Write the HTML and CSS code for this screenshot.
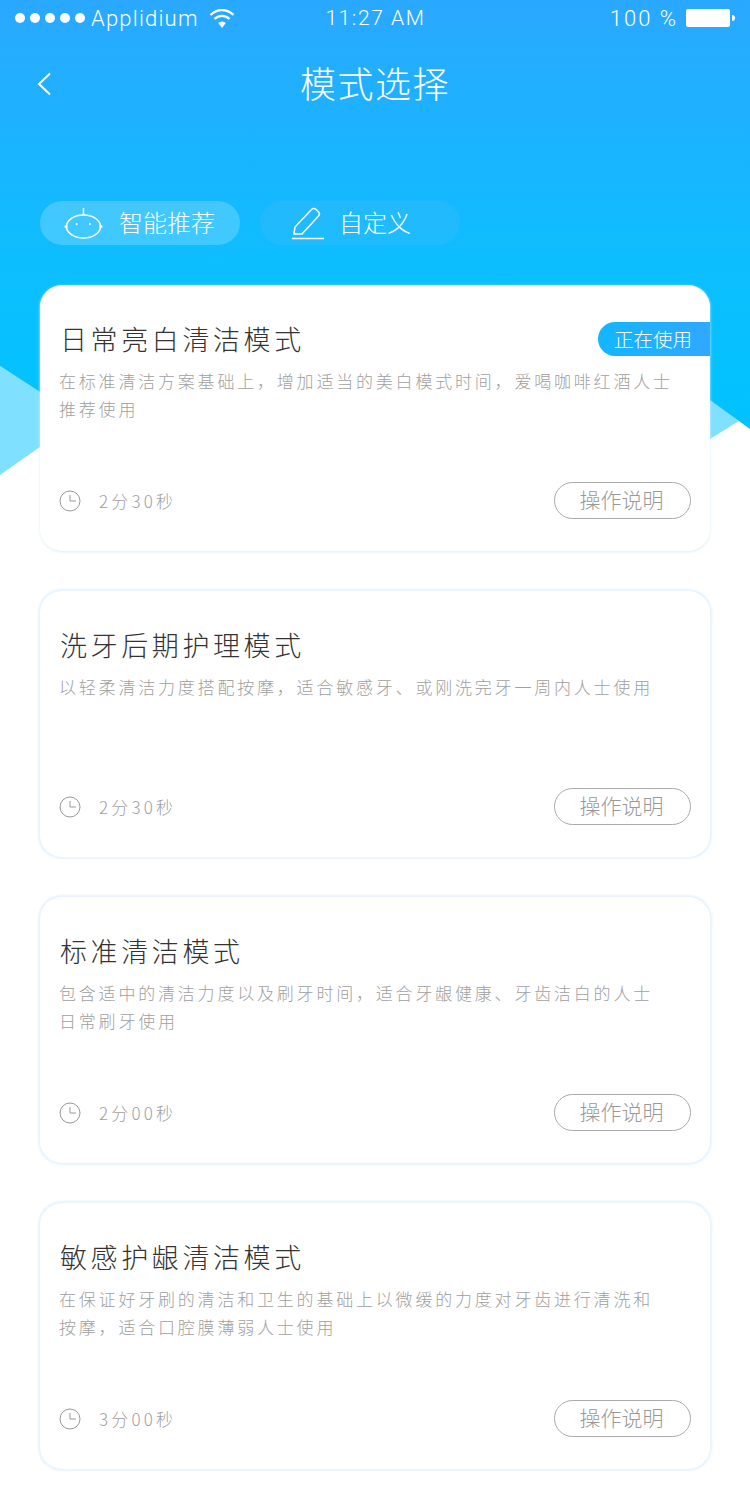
FILE: index.html
```html
<!doctype html>
<html lang="zh-CN">
  <head>
    <meta charset="UTF-8" />
    <meta name="viewport" content="width=device-width, initial-scale=1.0" />
    <title>模式选择</title>
    <link rel="stylesheet" href="styles.css">
  </head>
  <body>
    <svg class="bg" width="750" height="480" viewBox="0 0 750 480">
      <defs>
        <linearGradient id="sky" x1="0" y1="0" x2="0" y2="1">
          <stop offset="0" stop-color="#2aa8ff" />
          <stop offset="0.65" stop-color="#0cbfff" />
          <stop offset="1" stop-color="#00c2ff" />
        </linearGradient>
      </defs>
      <polygon points="0,366 40,392 40,447 0,475" fill="#80e0ff" />
      <polygon points="710,398 739,421 710,439" fill="#80e0ff" />
      <polygon points="0,0 750,0 750,429 710,400 40,392 0,366" fill="url(#sky)" />
    </svg>

    <div class="page">
      <div class="status-bar">
        <div class="status-left">
          <span class="dots"><i></i><i></i><i></i><i></i><i></i></span>
          <span class="carrier">Applidium</span>
          <svg class="wifi" width="26" height="20" viewBox="0 0 26 20" fill="none" stroke="#fff" stroke-width="2.4">
            <path d="M1.5 7a16 16 0 0 1 23 0" />
            <path d="M5.5 11a10.5 10.5 0 0 1 15 0" />
            <path d="M13 20l-3.8-5a5.5 5.5 0 0 1 7.6 0z" fill="#fff" stroke="none" />
          </svg>
        </div>
        <div class="status-time">11:27 AM</div>
        <div class="status-right">
          <span class="percent">100 %</span>
          <span class="battery"></span>
        </div>
      </div>

      <div class="nav">
        <svg class="back" width="15" height="24" viewBox="0 0 15 24" fill="none" stroke="#fff" stroke-width="2">
          <path d="M13 1.5L2 12l11 10.500" />
        </svg>
        <h1>模式选择</h1>
      </div>

      <div class="tabs">
        <div class="tab tab-active">
          <svg width="40" height="36" viewBox="0 0 40 36" fill="none" stroke="#fff" stroke-width="1.5">
            <path d="M19.500 0v7" />
            <ellipse cx="19.500" cy="18.500" rx="17" ry="11.500" />
            <circle cx="2" cy="18.500" r="1.500" fill="#fff" stroke="none" />
            <circle cx="37" cy="18.500" r="1.500" fill="#fff" stroke="none" />
            <circle cx="12.700" cy="16" r="1" fill="#fff" stroke="none" />
            <circle cx="26" cy="16" r="1" fill="#fff" stroke="none" />
          </svg>
          <span>智能推荐</span>
        </div>
        <div class="tab tab-plain">
          <svg width="34" height="34" viewBox="0 0 34 34" fill="none" stroke="#fff" stroke-width="1.500">
            <path d="M3 28l1-7L20.500 3.500a3 3 0 0 1 4.300-.2l2.600 2.500a3 3 0 0 1 .1 4.200L11 28z" />
            <path d="M1 32.500h32" />
          </svg>
          <span>自定义</span>
        </div>
      </div>

      <div class="card">
        <span class="badge">正在使用</span>
        <h2>日常亮白清洁模式</h2>
        <p class="desc">在标准清洁方案基础上，增加适当的美白模式时间，爱喝咖啡红酒人士<br>推荐使用</p>
        <div class="card-foot">
          <div class="time">
            <svg class="clock" width="22" height="22" viewBox="0 0 22 22" fill="none" stroke="#999" stroke-width="1">
              <circle cx="11" cy="11" r="10" />
              <path d="M11 5v6h6" />
            </svg>
            <span>2分30秒</span>
          </div>
          <div class="help-btn">操作说明</div>
        </div>
      </div>

      <div class="card">
        <h2>洗牙后期护理模式</h2>
        <p class="desc">以轻柔清洁力度搭配按摩，适合敏感牙、或刚洗完牙一周内人士使用</p>
        <div class="card-foot">
          <div class="time">
            <svg class="clock" width="22" height="22" viewBox="0 0 22 22" fill="none" stroke="#999" stroke-width="1">
              <circle cx="11" cy="11" r="10" />
              <path d="M11 5v6h6" />
            </svg>
            <span>2分30秒</span>
          </div>
          <div class="help-btn">操作说明</div>
        </div>
      </div>

      <div class="card">
        <h2>标准清洁模式</h2>
        <p class="desc">包含适中的清洁力度以及刷牙时间，适合牙龈健康、牙齿洁白的人士<br>日常刷牙使用</p>
        <div class="card-foot">
          <div class="time">
            <svg class="clock" width="22" height="22" viewBox="0 0 22 22" fill="none" stroke="#999" stroke-width="1">
              <circle cx="11" cy="11" r="10" />
              <path d="M11 5v6h6" />
            </svg>
            <span>2分00秒</span>
          </div>
          <div class="help-btn">操作说明</div>
        </div>
      </div>

      <div class="card">
        <h2>敏感护龈清洁模式</h2>
        <p class="desc">在保证好牙刷的清洁和卫生的基础上以微缓的力度对牙齿进行清洗和<br>按摩，适合口腔膜薄弱人士使用</p>
        <div class="card-foot">
          <div class="time">
            <svg class="clock" width="22" height="22" viewBox="0 0 22 22" fill="none" stroke="#999" stroke-width="1">
              <circle cx="11" cy="11" r="10" />
              <path d="M11 5v6h6" />
            </svg>
            <span>3分00秒</span>
          </div>
          <div class="help-btn">操作说明</div>
        </div>
      </div>
    </div>
  </body>
</html>
```

FILE: styles.css
```css
body {
  margin: 0;
  background-color: white;
  font-family: "Noto Sans CJK SC", "Noto Sans", sans-serif;
  font-weight: 300;
}

.bg {
  position: absolute;
  top: 0;
  left: 0;
  display: block;
}

.page {
  position: relative;
  width: 750px;
  height: 1509px;
  padding: 0 40px;
  box-sizing: border-box;
}

.status-bar {
  display: grid;
  grid-template-columns: 1fr 1fr 1fr;
  align-items: center;
  height: 36px;
  margin: 0 -40px;
  padding: 0 20px 0 15px;
  color: white;
  font-family: "Roboto", sans-serif;
  font-weight: 300;
}

.status-left {
  display: flex;
  align-items: center;
}

.dots {
  display: flex;
  gap: 5px;
}

.dots i {
  width: 10px;
  height: 10px;
  border-radius: 50%;
  background-color: white;
}

.carrier {
  margin-left: 6px;
  font-size: 22px;
  letter-spacing: 1.2px;
}

.wifi {
  margin-left: 10px;
}

.status-time {
  text-align: center;
  font-size: 21px;
  letter-spacing: 1.6px;
  margin-left: 6px;
}

.status-right {
  display: flex;
  align-items: center;
  justify-content: flex-end;
  gap: 8px;
  font-size: 22px;
  letter-spacing: 2px;
}

.battery {
  position: relative;
  width: 44px;
  height: 18px;
  border-radius: 2px;
  background-color: white;
}

.battery::after {
  content: "";
  position: absolute;
  top: 6px;
  left: 46px;
  width: 3px;
  height: 6px;
  border-radius: 0 3px 3px 0;
  background-color: white;
}

.nav {
  position: relative;
  display: flex;
  justify-content: center;
  align-items: center;
  height: 92px;
  padding-bottom: 4px;
}

.back {
  position: absolute;
  left: -3px;
  top: 36px;
}

h1 {
  margin: 0;
  color: white;
  font-size: 36px;
  font-weight: 300;
  letter-spacing: 1.500px;
}

.tabs {
  display: flex;
  gap: 20px;
  margin-top: 69px;
}

.tab {
  display: flex;
  align-items: center;
  width: 200px;
  height: 44px;
  border-radius: 22px;
  color: white;
  font-size: 24px;
}

.tab span {
  margin-bottom: 4px;
}

.tab-active {
  background-color: rgba(255, 255, 255, 0.2);
}

.tab-active svg {
  margin: 6px 15px 0 24px;
}

.tab-plain {
  background-color: rgba(90, 190, 240, 0.2);
}

.tab-plain svg {
  margin: 0 14px 0 31px;
}

.card {
  position: relative;
  display: flex;
  flex-direction: column;
  height: 266px;
  box-sizing: border-box;
  margin-bottom: 40px;
  padding: 36px 19px 32px 20px;
  background-color: white;
  border-radius: 22px;
  box-shadow: 0 0 2px 1.500px #e6f4ff;
}

.tabs + .card {
  margin-top: 40px;
  box-shadow: 0 1px 3px #d8edff;
}

h2 {
  margin: 0;
  color: #333;
  font-size: 27px;
  font-weight: 300;
  line-height: 36px;
  letter-spacing: 3.600px;
}

.desc {
  margin: 10px -10px 0 -1px;
  color: #a0a0a0;
  font-size: 17px;
  line-height: 28px;
  letter-spacing: 2.800px;
}

.badge {
  position: absolute;
  top: 37px;
  right: 0;
  width: 112px;
  height: 34px;
  box-sizing: border-box;
  padding-left: 16px;
  border-radius: 17px 0 0 17px;
  background: linear-gradient(to right, #12b6ff, #30a8ff);
  color: white;
  font-size: 19.500px;
  line-height: 34px;
}

.card-foot {
  display: flex;
  justify-content: space-between;
  align-items: center;
  margin-top: auto;
}

.time {
  display: flex;
  align-items: center;
  color: #a0a0a0;
  font-size: 17px;
  letter-spacing: 3.200px;
}

.clock {
  margin: 0 18px 0 -1px;
}

.help-btn {
  width: 137px;
  height: 37px;
  box-sizing: border-box;
  padding-right: 2px;
  border: 1px solid #aaa;
  border-radius: 19px;
  color: #999;
  font-size: 21px;
  line-height: 33px;
  text-align: center;
}
```
